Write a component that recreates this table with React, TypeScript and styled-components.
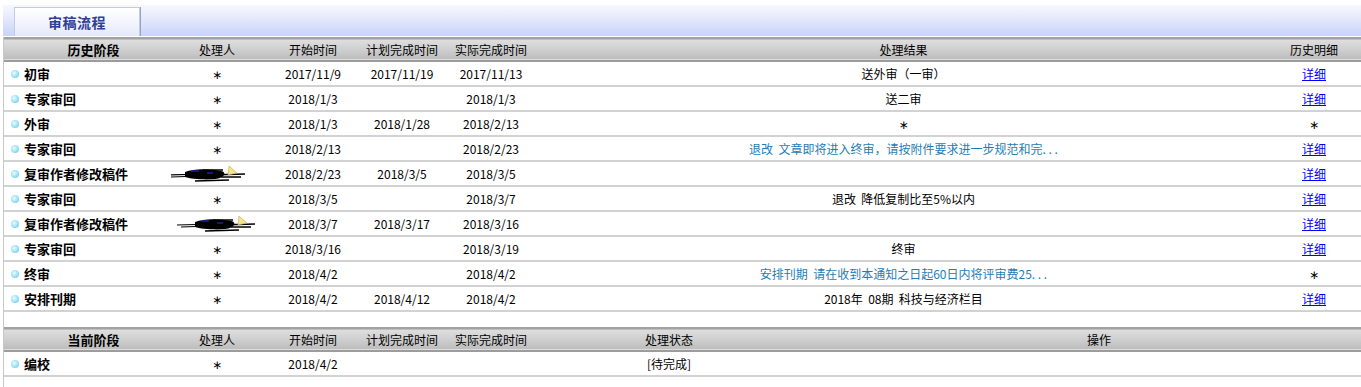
import styled, { createGlobalStyle } from 'styled-components';

const GlobalStyle = createGlobalStyle`
  html, body {
    margin: 0;
    padding: 0;
    background: #ffffff;
    overflow: hidden;
  }
  body {
    font-family: "Noto Sans CJK SC", "DejaVu Sans", sans-serif;
    font-size: 12px;
    color: #000;
  }
`;

const Page = styled.div`
  width: 1361px;
  height: 387px;
  padding: 5px 0 0 3px;
  box-sizing: border-box;
  overflow: hidden;
`;

const TabBar = styled.div`
  height: 31px;
  display: flex;
  align-items: flex-end;
  padding-left: 11px;
  background: linear-gradient(to bottom, #f7f8fe 0%, #e6eafc 40%, #c9d3fb 100%);
  border-bottom: 1px solid #ffffff;
`;

const Tab = styled.div`
  width: 126px;
  height: 29px;
  display: flex;
  align-items: center;
  justify-content: center;
  box-sizing: border-box;
  background: linear-gradient(to bottom, #ffffff 0%, #f1f3fd 60%, #e4e8fb 100%);
  border: 1px solid #c3cae6;
  border-bottom: none;
  box-shadow: 1px 0 0 #9aa2c0;
  color: #2f3f98;
  font-weight: bold;
  font-size: 14px;
  letter-spacing: 0.5px;
`;

const Body = styled.div`
  border-left: 1px solid #c8c8c8;
  height: 400px;
`;

const Table = styled.table<{ $wide?: boolean }>`
  table-layout: fixed;
  border-collapse: collapse;
  width: ${(p) => (p.$wide ? '1397px' : '1358px')};
`;

const HeadRow = styled.tr`
  background: linear-gradient(to bottom, #dedede 0%, #cfcfcf 50%, #bdbdbd 100%);
  border-top: 2px solid #a2a2a2;
  border-bottom: 2px solid #9c9c9c;
`;

const Th = styled.th<{ $strong?: boolean }>`
  height: 21px;
  padding: 0;
  font-weight: ${(p) => (p.$strong ? 'bold' : 'normal')};
  font-size: ${(p) => (p.$strong ? '13px' : '12px')};
  text-align: center;
  padding-left: ${(p) => (p.$strong ? '12px' : '0')};
  white-space: nowrap;
`;

const Row = styled.tr`
  border-bottom: 2px solid #d2d2d2;
`;

const Td = styled.td<{ $tone?: 'blue' }>`
  height: 23px;
  padding: 0;
  text-align: center;
  white-space: pre;
  overflow: hidden;
  color: ${(p) => (p.$tone === 'blue' ? '#1f7db6' : '#000')};
`;

const StageCell = styled.td`
  height: 23px;
  padding: 0 0 0 7px;
  white-space: nowrap;
`;

const Stage = styled.span`
  display: inline-flex;
  align-items: center;
  gap: 5px;
  font-weight: bold;
  font-size: 13px;
`;

const Dot = styled.span`
  width: 8px;
  height: 8px;
  border-radius: 50%;
  background: radial-gradient(circle at 40% 40%, #eafbff 0%, #9fe3f8 50%, #55bde4 100%);
`;

const Star = styled.span`
  font-family: "DejaVu Sans", sans-serif;
  font-size: 12px;
`;

const Detail = styled.a`
  color: #0000ff;
  text-decoration: underline;
  cursor: pointer;
`;

const Spacer = styled.div`
  height: 15px;
`;

const ScribbleSvg = styled.svg<{ $shift: number }>`
  display: block;
  margin: 0 auto;
  transform: translateX(${(p) => p.$shift}px);
`;

function Scribble({ shift = 0 }: { shift?: number }) {
  return (
    <ScribbleSvg $shift={shift} width="90" height="20" viewBox="0 0 90 20">
      <path d="M2 11 L40 10 M6 13 L36 12" stroke="#000" strokeWidth="1.2" fill="none" />
      <path d="M20 8 C30 4 44 5 56 7 C62 8 60 14 50 15 C40 16 26 15 20 13 Z" fill="#000" />
      <path d="M38 6 L58 6 M30 17 L64 16 M44 11 L80 10 M56 13 L76 13" stroke="#000" strokeWidth="1.6" fill="none" />
      <path d="M26 7 L34 7 M42 9 L48 9" stroke="#2233ee" strokeWidth="1" fill="none" />
      <path d="M64 2 L72 9 L63 11 Z" fill="#f4e58a" stroke="#b8a860" strokeWidth="0.6" />
    </ScribbleSvg>
  );
}

type Hist = {
  stage: string;
  person: 'star' | 'scribble' | 'scribble2';
  start: string;
  plan: string;
  actual: string;
  result: string;
  blue?: boolean;
  detail: boolean;
};

const history: Hist[] = [
  { stage: '初审', person: 'star', start: '2017/11/9', plan: '2017/11/19', actual: '2017/11/13', result: '送外审（一审）', detail: true },
  { stage: '专家审回', person: 'star', start: '2018/1/3', plan: '', actual: '2018/1/3', result: '送二审', detail: true },
  { stage: '外审', person: 'star', start: '2018/1/3', plan: '2018/1/28', actual: '2018/2/13', result: '∗', detail: false },
  { stage: '专家审回', person: 'star', start: '2018/2/13', plan: '', actual: '2018/2/23', result: '退改  文章即将进入终审，请按附件要求进一步规范和完. . .', blue: true, detail: true },
  { stage: '复审作者修改稿件', person: 'scribble', start: '2018/2/23', plan: '2018/3/5', actual: '2018/3/5', result: '', detail: true },
  { stage: '专家审回', person: 'star', start: '2018/3/5', plan: '', actual: '2018/3/7', result: '退改  降低复制比至5%以内', detail: true },
  { stage: '复审作者修改稿件', person: 'scribble2', start: '2018/3/7', plan: '2018/3/17', actual: '2018/3/16', result: '', detail: true },
  { stage: '专家审回', person: 'star', start: '2018/3/16', plan: '', actual: '2018/3/19', result: '终审', detail: true },
  { stage: '终审', person: 'star', start: '2018/4/2', plan: '', actual: '2018/4/2', result: '安排刊期  请在收到本通知之日起60日内将评审费25. . .', blue: true, detail: false },
  { stage: '安排刊期', person: 'star', start: '2018/4/2', plan: '2018/4/12', actual: '2018/4/2', result: '2018年  08期  科技与经济栏目', detail: true },
];

const baseCols = [167, 92, 100, 78, 100];

export default function App() {
  return (
    <>
      <GlobalStyle />
      <Page>
        <TabBar>
          <Tab>审稿流程</Tab>
        </TabBar>
        <Body>
          <Table>
            <colgroup>
              {[...baseCols, 725, 96].map((w, i) => (
                <col key={i} width={w} />
              ))}
            </colgroup>
            <thead>
              <HeadRow>
                <Th $strong>历史阶段</Th>
                <Th>处理人</Th>
                <Th>开始时间</Th>
                <Th>计划完成时间</Th>
                <Th>实际完成时间</Th>
                <Th>处理结果</Th>
                <Th>历史明细</Th>
              </HeadRow>
            </thead>
            <tbody>
              {history.map((h, i) => (
                <Row key={i}>
                  <StageCell>
                    <Stage>
                      <Dot />
                      {h.stage}
                    </Stage>
                  </StageCell>
                  <Td>
                    {h.person === 'star' ? <Star>∗</Star> : <Scribble shift={h.person === 'scribble' ? -7 : 3} />}
                  </Td>
                  <Td>{h.start}</Td>
                  <Td>{h.plan}</Td>
                  <Td>{h.actual}</Td>
                  <Td $tone={h.blue ? 'blue' : undefined}>
                    {h.result === '∗' ? <Star>∗</Star> : h.result}
                  </Td>
                  <Td>{h.detail ? <Detail>详细</Detail> : <Star>∗</Star>}</Td>
                </Row>
              ))}
            </tbody>
          </Table>
          <Spacer />
          <Table $wide>
            <colgroup>
              {[...baseCols, 256, 604].map((w, i) => (
                <col key={i} width={w} />
              ))}
            </colgroup>
            <thead>
              <HeadRow>
                <Th $strong>当前阶段</Th>
                <Th>处理人</Th>
                <Th>开始时间</Th>
                <Th>计划完成时间</Th>
                <Th>实际完成时间</Th>
                <Th>处理状态</Th>
                <Th>操作</Th>
              </HeadRow>
            </thead>
            <tbody>
              <Row>
                <StageCell>
                  <Stage>
                    <Dot />
                    编校
                  </Stage>
                </StageCell>
                <Td>
                  <Star>∗</Star>
                </Td>
                <Td>2018/4/2</Td>
                <Td></Td>
                <Td></Td>
                <Td>[待完成]</Td>
                <Td></Td>
              </Row>
            </tbody>
          </Table>
        </Body>
      </Page>
    </>
  );
}
